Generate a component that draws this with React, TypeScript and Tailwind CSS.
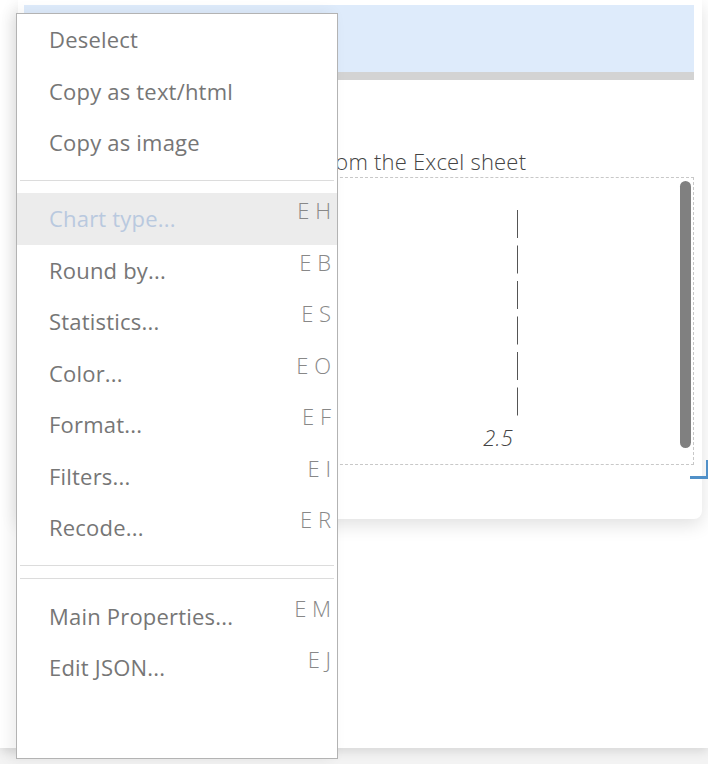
import React from "react";

interface MenuItem {
  label: string;
  shortcut?: string;
  disabled?: boolean;
}

type MenuEntry = MenuItem | "sep" | "double-sep";

const entries: MenuEntry[] = [
  { label: "Deselect" },
  { label: "Copy as text/html" },
  { label: "Copy as image" },
  "sep",
  { label: "Chart type...", shortcut: "E H", disabled: true },
  { label: "Round by...", shortcut: "E B" },
  { label: "Statistics...", shortcut: "E S" },
  { label: "Color...", shortcut: "E O" },
  { label: "Format...", shortcut: "E F" },
  { label: "Filters...", shortcut: "E I" },
  { label: "Recode...", shortcut: "E R" },
  "double-sep",
  { label: "Main Properties...", shortcut: "E M" },
  { label: "Edit JSON...", shortcut: "E J" },
];

function ContextMenu() {
  return (
    <div className="absolute left-[16px] top-[13px] flex h-[746px] w-[322px] flex-col border border-[#b3b3b3] bg-white shadow-[-6px_0_14px_rgba(0,0,0,0.07)]">
      {entries.map((entry, i) => {
        if (entry === "sep") {
          return <div key={i} className="mx-[3px] mb-[12px] mt-[11.5px] h-px bg-[#dcdcdc]" />;
        }
        if (entry === "double-sep") {
          return (
            <div key={i} className="mb-[11.5px] mt-[11.5px] flex flex-col gap-[12px]">
              <div className="mx-[3px] h-px bg-[#dcdcdc]" />
              <div className="mx-[3px] h-px bg-[#dcdcdc]" />
            </div>
          );
        }
        return (
          <div
            key={i}
            className={`flex h-[51.5px] shrink-0 items-center justify-between pl-[32px] pr-[6px] ${
              entry.disabled ? "bg-[#ececec] text-[#b9c9df]" : "text-[#767676]"
            }`}
          >
            <span>{entry.label}</span>
            {entry.shortcut && (
              <span className="-translate-y-[8px] font-light tracking-normal text-[#888888]">{entry.shortcut}</span>
            )}
          </div>
        );
      })}
    </div>
  );
}

function ChartBox() {
  return (
    <div className="flex h-[288px] border border-dashed border-[#c8c8c8]">
      <svg width="652" height="286" className="shrink-0">
        <line x1="492.5" y1="32" x2="492.5" y2="240" stroke="#555" strokeWidth="1" strokeDasharray="28 7.5" />
        <text
          x="488"
          y="268"
          textAnchor="end"
          fontSize="22"
          fontStyle="italic"
          fontWeight="300"
          fill="#444"
          fontFamily="'Open Sans', sans-serif"
        >
          2.5
        </text>
      </svg>
      <div className="mt-[3px] ml-auto mr-[2px] h-[267px] w-[11px] rounded-full bg-[#808080]" />
    </div>
  );
}

export default function App() {
  return (
    <div className="relative h-[764px] w-[708px] overflow-hidden bg-[#f3f3f3] font-['Open_Sans',sans-serif] text-[22px] tracking-[0.2px]">
      <div className="h-[748px] bg-white shadow-[0_3px_10px_rgba(0,0,0,0.12)]">
        <div className="ml-[18px] w-[684px] rounded-br-lg bg-white pb-[54px] pl-[6px] pr-[8px] pt-[5px] shadow-[0_6px_18px_rgba(0,0,0,0.12)]">
          <div className="h-[67px] bg-[#deebfb]" />
          <div className="h-[8px] bg-[#d3d3d3]" />
          <p className="mt-[66px] pl-[224px] font-light leading-[31px] text-[#444]">Values from the Excel sheet</p>
          <ChartBox />
        </div>
      </div>

      <div className="absolute left-[690px] top-[460px] h-[19px] w-[18px] border-b-[3px] border-r-[2px] border-[#5090c8]" />

      <ContextMenu />
    </div>
  );
}
